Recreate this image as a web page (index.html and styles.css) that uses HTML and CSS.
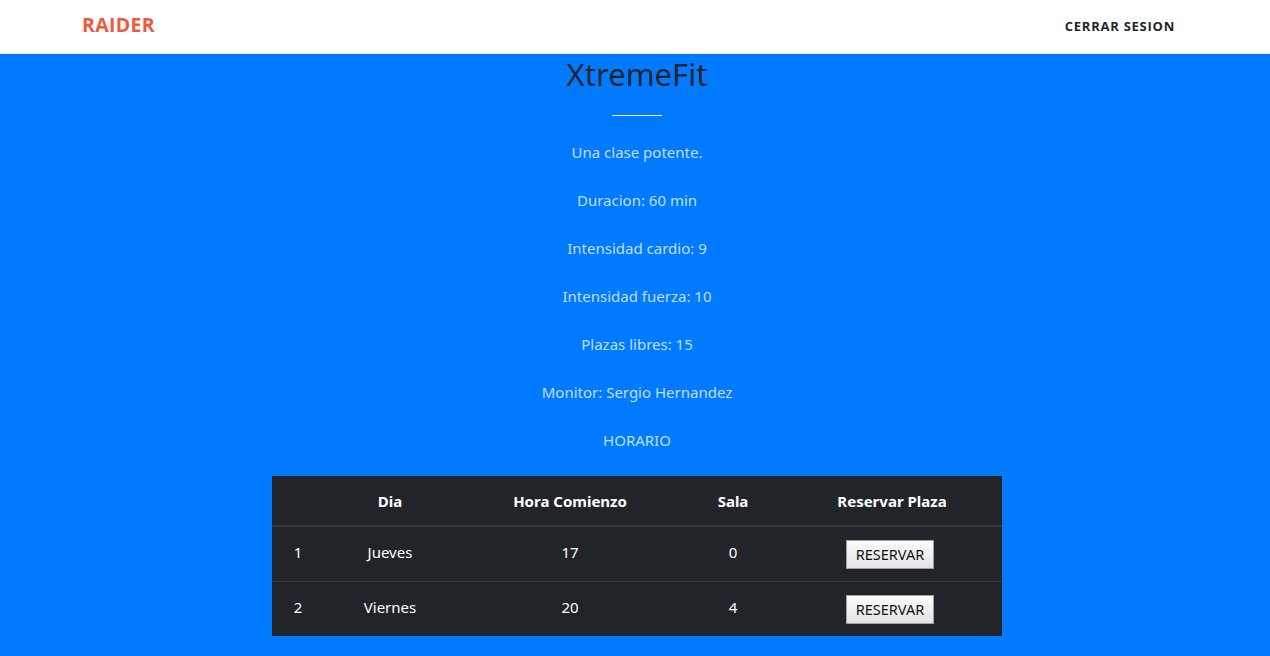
FILE: index.html
```html
<!DOCTYPE html>
<html lang="es">
<head>
<meta charset="utf-8">
<title>XtremeFit</title>
<link rel="stylesheet" href="styles.css">
</head>
<body>
<header class="nav">
  <a class="brand" href="#">RAIDER</a>
  <a class="logout" href="#">CERRAR SESION</a>
</header>
<main class="page">
  <h1 class="title">XtremeFit</h1>
  <hr class="divider">
  <p class="info">Una clase potente.</p>
  <p class="info">Duracion: 60 min</p>
  <p class="info">Intensidad cardio: 9</p>
  <p class="info">Intensidad fuerza: 10</p>
  <p class="info">Plazas libres: 15</p>
  <p class="info">Monitor: Sergio Hernandez</p>
  <p class="info">HORARIO</p>
  <table class="schedule">
    <thead>
      <tr>
        <th class="c1"></th>
        <th class="c2">Dia</th>
        <th class="c3">Hora Comienzo</th>
        <th class="c4">Sala</th>
        <th class="c5">Reservar Plaza</th>
      </tr>
    </thead>
    <tbody>
      <tr>
        <td class="txt">1</td>
        <td class="txt">Jueves</td>
        <td class="txt">17</td>
        <td class="txt">0</td>
        <td class="act"><button class="btn">RESERVAR</button></td>
      </tr>
      <tr>
        <td class="txt">2</td>
        <td class="txt">Viernes</td>
        <td class="txt">20</td>
        <td class="txt">4</td>
        <td class="act"><button class="btn">RESERVAR</button></td>
      </tr>
    </tbody>
  </table>
</main>
</body>
</html>
```

FILE: styles.css
```css
html, body {
  margin: 0;
  padding: 0;
}
body {
  background: #007bff;
  font-family: "Noto Sans", "Open Sans", sans-serif;
  color: #212529;
  min-height: 656px;
}
.nav {
  height: 53px;
  background: #fff;
  border-bottom: 1px solid #e6e6e6;
  display: flex;
  align-items: center;
  justify-content: space-between;
  padding: 0 95px 0 82px;
}
.brand {
  font-family: "Open Sans", sans-serif;
  font-weight: 700;
  font-size: 19.5px;
  color: #ee5a3c;
  text-decoration: none;
  letter-spacing: 0.3px;
  margin-top: -4px;
}
.logout {
  font-family: "Open Sans", sans-serif;
  font-weight: 700;
  font-size: 13px;
  color: #212529;
  text-decoration: none;
  letter-spacing: 0.75px;
  margin-top: -2px;
}
.page {
  display: flex;
  flex-direction: column;
  align-items: center;
  padding: 0 0 20px 4px;
}
.title {
  margin: 0;
  font-size: 31px;
  font-weight: 400;
  line-height: 40px;
  color: #212529;
}
.divider {
  width: 50px;
  border: 0;
  border-top: 1px solid #fff;
  margin: 21px 0 24px;
}
.info {
  margin: 0 0 24px;
  font-size: 15px;
  line-height: 24px;
  color: #c2deff;
}
.schedule {
  width: 730px;
  border-collapse: collapse;
  background: #212529;
  color: #fff;
  text-align: center;
  font-size: 15px;
}
.schedule th {
  font-weight: 700;
  height: 49px;
  padding: 0;
  border-bottom: 2px solid #32383e;
}
.schedule td {
  padding: 0;
  border-top: 1px solid #32383e;
}
.schedule td.txt {
  height: 49px;
  padding-bottom: 5px;
}
.schedule td.act {
  height: 54px;
}
.schedule tbody tr:first-child td {
  border-top: 0;
}
.c1 { width: 52px; }
.c2 { width: 132px; }
.c3 { width: 228px; }
.c4 { width: 98px; }
.c5 { width: 220px; }
.btn {
  font-family: "Noto Sans", sans-serif;
  font-size: 14.5px;
  width: 88px;
  height: 29px;
  padding: 0;
  margin-left: -4px;
  color: #111;
  background: linear-gradient(#fbfbfb, #e4e4e4);
  border: 1px solid #a0a0a0;
  border-radius: 0;
}
```
